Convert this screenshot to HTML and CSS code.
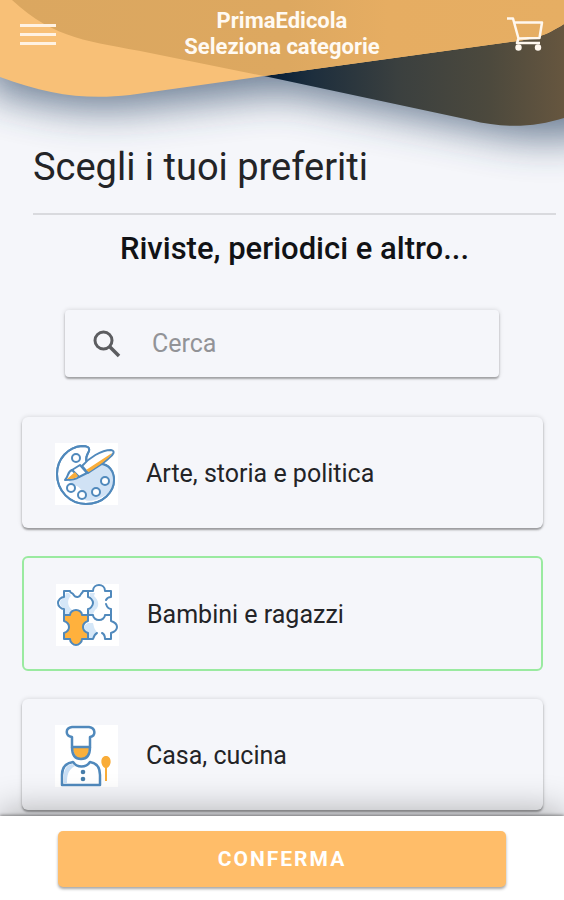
FILE: index.html
```html
<!DOCTYPE html>
<html lang="it">
<head>
<meta charset="utf-8">
<meta name="viewport" content="width=device-width, initial-scale=1">
<title>PrimaEdicola</title>
<link rel="stylesheet" href="styles.css">
</head>
<body>
<header class="topbar">
  <svg class="waves" viewBox="0 0 564 220" preserveAspectRatio="none" aria-hidden="true">
    <defs>
      <filter id="soft" x="-20%" y="-50%" width="140%" height="200%"><feGaussianBlur stdDeviation="20"/></filter>
      <linearGradient id="dark" x1="264" x2="564" y1="0" y2="0" gradientUnits="userSpaceOnUse">
        <stop offset="0" stop-color="#041c35"/><stop offset=".16" stop-color="#1d2e3d"/><stop offset=".45" stop-color="#3b403f"/><stop offset=".75" stop-color="#4c493d"/><stop offset="1" stop-color="#66563f"/>
      </linearGradient>
      <linearGradient id="shade" x1="12" x2="564" y1="0" y2="0" gradientUnits="userSpaceOnUse">
        <stop offset="0" stop-color="#dba760"/><stop offset=".5" stop-color="#dda860"/><stop offset=".68" stop-color="#e6ad62"/><stop offset="1" stop-color="#e6ae63"/>
      </linearGradient>
      <clipPath id="front"><path d="M0 0H564V24C545 36 535 39 510 42L264 76L130 95C86 100 48 95 0 77Z"/></clipPath>
    </defs>
    <path d="M-12 -40H620V124C575 143 535 142 480 130L282 92L130 108C80 112 40 104 -12 90Z" fill="#2c4563" opacity=".68" filter="url(#soft)"/>
    <path d="M12 0C55 40 90 41 150 53L264 76L470 120C505 129 535 127 564 118V0Z" fill="url(#dark)"/>
    <path d="M0 0H564V24C545 36 535 39 510 42L264 76L130 95C86 100 48 95 0 77Z" fill="#f8c077"/>
    <path d="M12 0C55 40 90 41 150 53L264 76L470 120C505 129 535 127 564 118V0Z" fill="url(#shade)" clip-path="url(#front)"/>
  </svg>
  <button class="icon-button" type="button" aria-label="Menu">
    <svg width="36" height="24" viewBox="0 0 36 24" aria-hidden="true"><path d="M0 2.500H36M0 11.500H36M0 20.500H36" stroke="#fff2e2" stroke-width="3"/></svg>
  </button>
  <div class="brand">PrimaEdicola<br>Seleziona categorie</div>
  <button class="icon-button" type="button" aria-label="Carrello">
    <svg width="38" height="36" viewBox="0 0 38 36" aria-hidden="true"><g fill="none" stroke="#fff8ef" stroke-width="2.500" stroke-linejoin="round"><path d="M1 2.500H7L12.500 22.500M8.500 6.500H36L33.500 22L12.500 22.500L11 27H34"/></g><g fill="#fff8ef"><circle cx="12.500" cy="31.500" r="3.200"/><circle cx="32" cy="31.500" r="3.200"/></g></svg>
  </button>
</header>

<main class="content">
  <div class="heading">
    <h1>Scegli i tuoi preferiti</h1>
    <h2>Riviste, periodici e altro...</h2>
  </div>

  <label class="search">
    <svg width="28" height="28" viewBox="0 0 28 28" fill="none" stroke="#5c5d60" stroke-width="3" aria-hidden="true"><circle cx="10.500" cy="10.500" r="8.500"/><path d="M16.500 16.500L26 26" stroke-width="3.500"/></svg>
    <input type="search" placeholder="Cerca" aria-label="Cerca">
  </label>

  <div class="categories">
    <button class="category" type="button" aria-pressed="false">
      <svg class="picture" viewBox="0 0 63 62" aria-hidden="true">
        <g stroke="#5089bc" stroke-width="2" stroke-linejoin="round">
          <path d="M34 8C35 4 32 3 27 3C13 4 2 16 2 31C2 48 15 61 31 61C48 61 59 49 59 37C59 28 54 21 46 21L33 20C29 18 32 13 34 8Z" fill="#fff"/>
          <path d="M33 20L20 28L13 36C17 46 27 38 29 56C34 62 59 53 59 37C59 27 54 21 46 21L35 27Z" fill="#d0e2f5" stroke="none"/>
          <path d="M34 8C35 4 32 3 27 3C13 4 2 16 2 31C2 48 15 61 31 61C48 61 59 49 59 37C59 29 54 21 45 21M34 8C31 13 30 16 33 19" fill="none"/>
          <g fill="#fff"><circle cx="21" cy="15" r="4"/><circle cx="16" cy="45" r="4"/><circle cx="27" cy="52" r="4"/><circle cx="41" cy="49" r="4"/><circle cx="50" cy="38" r="4"/></g>
          <path d="M27 23C34 15 46 7 56 7C61 8 58 12 54 15C48 21 40 25 33 30Z" fill="#fff"/>
          <path d="M31 27L57 10C54 16 43 23 34 29Z" fill="#faad39" stroke="none"/>
          <path d="M17 27L25 22L32 30L24 34Z" fill="#fff"/>
          <path d="M17 27L24 34C20 37 15 37 10 37C14 33 12 29 17 27Z" fill="#fff"/>
          <path d="M20 29L23 33C20 36 16 36 12 36Z" fill="#faad39" stroke="none"/>
        </g>
      </svg>
      <span>Arte, storia e politica</span>
    </button>
    <button class="category selected" type="button" aria-pressed="true">
      <svg class="picture" viewBox="0 0 63 62" aria-hidden="true">
        <g fill="#fff">
          <path d="M8 7H14C14 9 16 9 17 10C20 15 24 13 25 10C26 9 27 8 27 7H32V13C34 13 37 16 37 19C37 22 34 25 32 25V31H8V25C5 25 2 22 2 19C2 16 5 13 8 13Z"/>
          <path d="M32 31H55V37C58 38 61 40 61 43C61 46 58 48 55 49V55H32Z"/>
          <path d="M32 7H37C37 3 40 1 43 1C46 1 49 3 49 7H55V31H32Z"/>
        </g>
        <path d="M4 18C5 14 9 15 10 9H13L15 12C11 15 11 22 16 26C15 28 14 29 13 30H9V24C6 24 4 22 4 18Z" fill="#d5e7f8"/>
        <path d="M34 9H39L38 12C43 16 44 23 39 26L37 30H33V26C39 22 39 16 34 12ZM32 39H37L38 43C39 47 42 47 40 49L37 54H32V49C27 46 27 41 32 39Z" fill="#d5e7f8"/>
        <path d="M8 31H14C14 28 17 26 20 26C23 26 26 28 26 31H32V37C29 38 27 40 27 43C27 46 29 48 32 49V55H26C26 58 23 61 20 61C17 61 14 58 14 55H8V49C11 48 13 46 13 43C13 40 11 38 8 37Z" fill="#ffb13d"/>
        <g stroke="#5089bc" stroke-width="2" stroke-linejoin="round" stroke-linecap="round" fill="none">
          <path d="M32 7H27C27 8 26 9 25 10C24 13 20 15 17 10C16 9 14 9 14 7H8V13C5 13 2 16 2 19C2 22 5 25 8 25V31"/>
          <path d="M32 7H37C37 3 40 1 43 1C46 1 49 3 49 7H55V13C53 13 51 14 50 16M50 20C51 23 53 25 55 25V31"/>
          <path d="M32 7V13C34 13 37 16 37 19C37 22 34 25 32 25V31"/>
          <path d="M8 31H14C14 28 17 26 20 26C23 26 26 28 26 31H37C37 34 40 36 43 36C46 36 49 34 49 31H55"/>
          <path d="M55 31V37C58 38 61 40 61 43C61 46 58 48 55 49V55H49C49 52 48 50 46 49M41 49C39 50 38 52 37 55H26C26 58 23 61 20 61C17 61 14 58 14 55H8V49C11 48 13 46 13 43C13 40 11 38 8 37V31"/>
          <path d="M32 31V37C29 38 27 40 27 43C27 46 29 48 32 49V55"/>
        </g>
      </svg>
      <span>Bambini e ragazzi</span>
    </button>
    <button class="category" type="button" aria-pressed="false">
      <svg class="picture" viewBox="0 0 63 62" aria-hidden="true">
        <path d="M18 23H34C34 30 31 34 27 34C23 34 18 30 18 23Z" fill="#fbb03b"/>
        <g stroke="#5089bc" stroke-width="2.500" stroke-linejoin="round" fill="none">
          <path d="M17 22V12C10 11 10 3 17 2H34C41 3 41 11 35 12V22Z" fill="#fff"/>
          <path d="M17 22C17 30 20 34 26 34C32 34 35 30 35 22"/>
          <path d="M7 60V50C7 42 11 38 18 37C22 43 31 43 35 37C42 38 45 43 45 50V60Z" fill="#fff"/>
        </g>
        <path d="M9 58V50C9 44 12 40 17 39L20 41C13 45 12 50 12 58Z" fill="#c9dff5"/>
        <g fill="#467da9"><circle cx="28" cy="47" r="2.300"/><circle cx="28" cy="54" r="2.300"/></g>
        <path d="M51 31C57 31 57 41 52 43V56H50V43C45 41 45 31 51 31Z" fill="#f9ac38"/>
      </svg>
      <span>Casa, cucina</span>
    </button>
  </div>
</main>

<footer class="actions">
  <button class="confirm" type="button">CONFERMA</button>
</footer>
</body>
</html>
```

FILE: styles.css
```css
* { box-sizing: border-box; }

body {
  margin: 0;
  min-height: 100vh;
  display: flex;
  flex-direction: column;
  background: #f5f6fa;
  color: #232427;
  font-family: Roboto, sans-serif;
}

button, input { font: inherit; color: inherit; }
button { cursor: pointer; }

.topbar {
  position: relative;
  display: flex;
  justify-content: space-between;
  align-items: flex-start;
  padding: 8px 20px 0;
}

.waves {
  position: absolute;
  top: 0;
  left: 0;
  width: 100%;
  height: 220px;
  pointer-events: none;
}

.icon-button {
  position: relative;
  display: flex;
  width: 38px;
  padding: 8px 0 0;
  border: 0;
  background: none;
}
.icon-button:first-of-type { padding-top: 15px; }

.brand {
  position: relative;
  color: #fffaf3;
  font-size: 22px;
  font-weight: 700;
  line-height: 26px;
  text-align: center;
}

.content {
  position: relative;
  padding-bottom: 6px;
}

.heading { padding: 82px 8px 0 33px; }

h1 {
  margin: 0;
  padding-bottom: 21px;
  border-bottom: 2px solid #d9dade;
  font-size: 38px;
  font-weight: 400;
  line-height: 50px;
}

h2 {
  margin: 0;
  padding: 15px 0 0;
  color: #111215;
  font-size: 31px;
  font-weight: 500;
  line-height: 38px;
  text-align: center;
}

.search {
  display: flex;
  align-items: center;
  gap: 31px;
  height: 67px;
  margin: 42px 65px 0;
  padding: 0 28px;
  border-radius: 4px;
  background: #f5f6fa;
  box-shadow: 0 2px 2px rgba(0, 0, 0, .3), 0 0 5px rgba(0, 0, 0, .14);
}
.search svg { flex: none; }
.search input {
  flex: 1;
  min-width: 0;
  padding: 0;
  border: 0;
  outline: 0;
  background: none;
  font-size: 25px;
}
.search input::placeholder { color: #929397; opacity: 1; }

.categories {
  display: grid;
  gap: 28px;
  padding: 40px 21px 0 22px;
}

.category {
  display: flex;
  align-items: center;
  gap: 28px;
  height: 111px;
  padding: 2px 33px 0;
  border: 0;
  border-radius: 6px;
  background: #f5f6fa;
  box-shadow: 0 2px 2px rgba(0, 0, 0, .33), 0 0 5px rgba(0, 0, 0, .14);
  font-size: 25px;
  text-align: left;
}
.category.selected {
  height: 115px;
  padding: 2px 32px 0;
  border: 2px solid #9aeaa0;
  box-shadow: none;
}

.picture {
  flex: none;
  width: 63px;
  height: 62px;
  background: #fff;
}

.actions {
  position: sticky;
  bottom: 0;
  margin-top: auto;
  padding: 15px 58px 13px;
  background: #fff;
  box-shadow: 0 -1px 3px rgba(0, 0, 0, .4), 0 -4px 36px rgba(0, 0, 0, .32);
}

.confirm {
  display: block;
  width: 100%;
  height: 56px;
  padding: 0;
  border: 0;
  border-radius: 5px;
  background: #ffbd69;
  box-shadow: 0 2px 3px rgba(0, 0, 0, .35);
  color: #fff;
  font-size: 21px;
  font-weight: 700;
  letter-spacing: 2px;
}
```
